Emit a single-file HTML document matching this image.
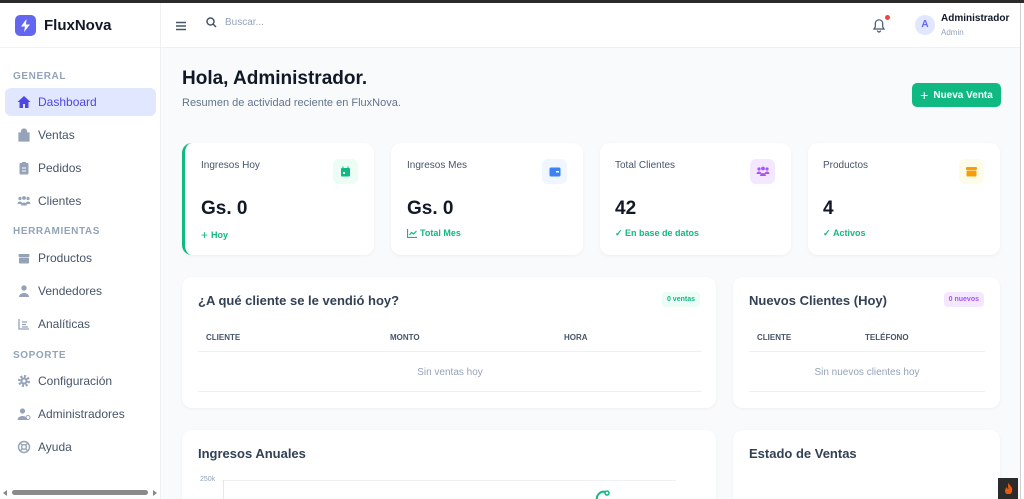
<!DOCTYPE html>
<html style="width:1024px;height:499px;overflow:hidden"><head><meta charset="utf-8"><style>
*{box-sizing:border-box;margin:0;padding:0}
body{width:1024px;height:499px;overflow:hidden;font-family:"Liberation Sans",sans-serif;background:#f8fafc;position:relative;color:#1e293b}
.topbar{position:absolute;left:0;top:0;width:1024px;height:3px;background:#2b2b2b}
.side{position:absolute;left:0;top:3px;width:161px;height:496px;background:#fff;border-right:1px solid #eef0f4}
.logo{height:45px;border-bottom:1px solid #f1f3f7;display:flex;align-items:center;padding-left:15px}
.logo .ic{width:21px;height:21px;border-radius:5px;background:#6366f1;display:flex;align-items:center;justify-content:center}
.logo span{font-weight:bold;font-size:15px;margin-left:8px;color:#111827}
.sec{font-size:10px;font-weight:bold;color:#94a3b8;letter-spacing:.6px;padding-left:13px;position:absolute}
.item{position:absolute;left:5px;width:151px;height:28px;border-radius:6px;display:flex;align-items:center;padding-left:12px;font-size:12px;color:#475569}
.item svg{width:14px;height:14px;margin-right:7px}
.item.act{background:#e0e7ff;color:#4f46e5}
.hdr{position:absolute;left:161px;top:3px;width:859px;height:45px;background:#fff;border-bottom:1px solid #eef0f4}
.card{position:absolute;background:#fff;border-radius:10px;box-shadow:0 1px 3px rgba(0,0,0,.05);overflow:hidden}
.lbl{position:absolute;left:18px;top:17px;font-size:10px;color:#475569}
.val{position:absolute;left:18px;top:55px;font-size:19px;font-weight:bold;color:#111827}
.sub{position:absolute;left:18px;top:85px;font-size:9px;font-weight:bold;color:#10b981;display:flex;align-items:center}
.bx{position:absolute;right:16px;top:16px;width:25px;height:25px;border-radius:6px;display:flex;align-items:center;justify-content:center}
.ttl{position:absolute;left:16px;top:16px;font-size:13px;font-weight:bold;color:#334155}
.th{position:absolute;top:56px;font-size:8px;font-weight:bold;color:#475569}
.line{position:absolute;left:16px;height:1px;background:#eef0f4}
.empty{position:absolute;top:90px;font-size:10px;color:#94a3b8;text-align:center}
.badge{position:absolute;top:15px;height:15px;border-radius:4px;font-size:7px;font-weight:bold;display:flex;align-items:center;padding:0 5px}
</style></head><body>
<div class="topbar"></div>
<div class="side">
 <div class="logo"><div class="ic"><svg width="11" height="13" viewBox="0 0 11 13"><path d="M6.5 0L1 7.5h4L4 13l6-7.5H6z" fill="#fff"/></svg></div><span>FluxNova</span></div>
 <div class="sec" style="top:68px">GENERAL</div>
 <div class="item act" style="top:85px"><svg viewBox="0 0 14 14"><path d="M7 1L0.5 7H2.5v6h3.5V9h2v4h3.5V7h2z" fill="#4f46e5"/></svg>Dashboard</div>
 <div class="item" style="top:118px"><svg viewBox="0 0 14 14"><path d="M2 5h10v8H2z M4.5 5V3.5a2.5 2.5 0 015 0V5" fill="#94a3b8" stroke="#94a3b8" stroke-width="1.2"/></svg>Ventas</div>
 <div class="item" style="top:151px"><svg viewBox="0 0 14 14"><rect x="2.5" y="2" width="9" height="11.5" rx="1" fill="#94a3b8"/><rect x="5" y="1" width="4" height="2.5" fill="#94a3b8"/><path d="M5 7h4M5 10h4" stroke="#fff"/></svg>Pedidos</div>
 <div class="item" style="top:184px"><svg viewBox="0 0 14 14" fill="#94a3b8"><circle cx="3" cy="4.5" r="1.6"/><circle cx="7" cy="4" r="1.9"/><circle cx="11" cy="4.5" r="1.6"/><path d="M0.5 10a2.5 2.5 0 015 0zM4 11.5a3 3 0 016 0zM8.5 10a2.5 2.5 0 015 0z"/></svg>Clientes</div>
 <div class="sec" style="top:223px">HERRAMIENTAS</div>
 <div class="item" style="top:241px"><svg viewBox="0 0 14 14" fill="#94a3b8"><rect x="1.5" y="3" width="11" height="3" rx="1"/><rect x="2" y="6.5" width="10" height="6" rx="1"/></svg>Productos</div>
 <div class="item" style="top:274px"><svg viewBox="0 0 14 14" fill="#94a3b8"><circle cx="7" cy="4" r="2.7"/><path d="M2 13a5 4 0 0110 0z"/></svg>Vendedores</div>
 <div class="item" style="top:307px"><svg viewBox="0 0 14 14" fill="none" stroke="#94a3b8" stroke-width="1.3"><path d="M2 2v10h10M5 5h5M5 7.5h4M5 10h6"/></svg>Analíticas</div>
 <div class="sec" style="top:347px">SOPORTE</div>
 <div class="item" style="top:364px"><svg viewBox="0 0 14 14"><circle cx="7" cy="7" r="4.5" fill="none" stroke="#94a3b8" stroke-width="3" stroke-dasharray="2 1.5"/><circle cx="7" cy="7" r="3.5" fill="#94a3b8"/><circle cx="7" cy="7" r="1.5" fill="#fff"/></svg>Configuración</div>
 <div class="item" style="top:397px"><svg viewBox="0 0 14 14" fill="#94a3b8"><circle cx="5.5" cy="4" r="2.6"/><path d="M0.5 13a5 4 0 0110 0z"/><circle cx="11" cy="10.5" r="2" fill="none" stroke="#94a3b8"/></svg>Administradores</div>
 <div class="item" style="top:430px"><svg viewBox="0 0 14 14" fill="none" stroke="#94a3b8" stroke-width="1.4"><circle cx="7" cy="7" r="5.5"/><circle cx="7" cy="7" r="2.3"/><path d="M3 3l2.3 2.3M11 3L8.7 5.3M3 11l2.3-2.3M11 11L8.7 8.7"/></svg>Ayuda</div>
 <div style="position:absolute;left:3px;top:487px;width:0;height:0;border:3px solid transparent;border-right:4px solid #888;border-left:0"></div>
 <div style="position:absolute;left:12px;top:487px;width:136px;height:5px;border-radius:3px;background:#8a8a8a"></div>
 <div style="position:absolute;left:153px;top:487px;width:0;height:0;border:3px solid transparent;border-left:4px solid #888;border-right:0"></div>
</div>
<div class="hdr">
 <svg style="position:absolute;left:15px;top:18px" width="11" height="10"><path d="M0 1.5h10M0 5h10M0 8.5h10" stroke="#475569" stroke-width="1.4"/></svg>
 <svg style="position:absolute;left:45px;top:14px" width="11" height="11" fill="none" stroke="#475569" stroke-width="1.5"><circle cx="4.5" cy="4.5" r="3.5"/><path d="M7 7l3 3"/></svg>
 <div style="position:absolute;left:64px;top:14px;font-size:10px;color:#94a3b8">Buscar...</div>
 <svg style="position:absolute;left:711px;top:14px" width="14" height="16" fill="none" stroke="#475569" stroke-width="1.2"><path d="M2 12h10l-1.3-2V6.5a3.7 3.7 0 00-7.4 0V10zM5.5 13.5a1.5 1.5 0 003 0"/></svg>
 <div style="position:absolute;left:724px;top:12px;width:5px;height:5px;border-radius:50%;background:#ef4444"></div>
 <div style="position:absolute;left:754px;top:12px;width:20px;height:20px;border-radius:50%;background:#e0e7ff;color:#6366f1;font-size:10px;font-weight:bold;text-align:center;line-height:20px">A</div>
 <div style="position:absolute;left:780px;top:10px;font-size:10px;font-weight:bold;color:#111827">Administrador</div>
 <div style="position:absolute;left:780px;top:25px;font-size:8px;color:#94a3b8">Admin</div>
</div>
<div style="position:absolute;left:1020px;top:3px;width:4px;height:496px;background:#fff;border-left:1px solid #d0d0d0"></div>
<div style="position:absolute;left:182px;top:68px;font-size:19px;font-weight:bold;color:#111827">Hola, Administrador.</div>
<div style="position:absolute;left:182px;top:97px;font-size:11px;color:#64748b">Resumen de actividad reciente en FluxNova.</div>
<div style="position:absolute;left:912px;top:83px;width:89px;height:24px;border-radius:5px;background:#10b981;color:#fff;font-size:10px;font-weight:bold;display:flex;align-items:center;justify-content:center"><span style="font-size:14px;font-weight:normal;margin-right:5px">+</span>Nueva Venta</div>

<div class="card" style="left:182px;top:143px;width:192px;height:112px;border-left:3px solid #10b981"><div class="lbl" style="left:16px">Ingresos Hoy</div><div class="bx" style="background:#ecfdf5"><svg width="11" height="11"><rect x="1" y="2" width="9" height="8.5" rx="1" fill="#10b981"/><rect x="2.5" y="0.5" width="1" height="2" fill="#10b981"/><rect x="7.5" y="0.5" width="1" height="2" fill="#10b981"/><rect x="3" y="6" width="2" height="2" fill="#fff"/></svg></div><div class="val" style="left:16px">Gs. 0</div><div class="sub" style="left:16px"><span style="font-size:12px;font-weight:normal;margin-right:3px">+</span>Hoy</div></div>
<div class="card" style="left:391px;top:143px;width:192px;height:112px"><div class="lbl" style="left:16px">Ingresos Mes</div><div class="bx" style="background:#eff6ff"><svg width="12" height="10"><rect x="0.5" y="0.5" width="11" height="9" rx="1.5" fill="#3b82f6"/><rect x="7" y="4" width="3" height="1.5" fill="#fff"/></svg></div><div class="val" style="left:16px">Gs. 0</div><div class="sub" style="left:16px"><svg width="10" height="9" style="margin-right:3px" fill="none" stroke="#10b981" stroke-width="1.2"><path d="M0.5 0v8.5H10M2.5 6l2-2.5 2 1.5 3-3"/></svg>Total Mes</div></div>
<div class="card" style="left:600px;top:143px;width:191px;height:112px"><div class="lbl" style="left:15px">Total Clientes</div><div class="bx" style="background:#f3e8ff"><svg width="14" height="11" fill="#a855f7"><circle cx="3" cy="3" r="1.6"/><circle cx="7" cy="2.5" r="1.9"/><circle cx="11" cy="3" r="1.6"/><path d="M0.5 8a2.5 2.5 0 015 0zM4 10a3 3 0 016 0zM8.5 8a2.5 2.5 0 015 0z"/></svg></div><div class="val" style="left:15px">42</div><div class="sub" style="left:15px">✓&nbsp;En base de datos</div></div>
<div class="card" style="left:808px;top:143px;width:192px;height:112px"><div class="lbl" style="left:15px">Productos</div><div class="bx" style="background:#fefce8"><svg width="11" height="10" fill="#f59e0b"><rect x="0" y="0" width="11" height="3" rx="1"/><rect x="0.5" y="3.5" width="10" height="6" rx="1"/></svg></div><div class="val" style="left:15px">4</div><div class="sub" style="left:15px">✓&nbsp;Activos</div></div>

<div class="card" style="left:182px;top:277px;width:534px;height:131px">
 <div class="ttl">¿A qué cliente se le vendió hoy?</div>
 <div class="badge" style="right:16px;background:#ecfdf5;color:#10b981">0 ventas</div>
 <div class="th" style="left:24px">CLIENTE</div><div class="th" style="left:208px">MONTO</div><div class="th" style="left:382px">HORA</div>
 <div class="line" style="top:74px;width:504px"></div>
 <div class="empty" style="left:16px;width:504px">Sin ventas hoy</div>
 <div class="line" style="top:114px;width:504px"></div>
</div>
<div class="card" style="left:733px;top:277px;width:267px;height:131px">
 <div class="ttl">Nuevos Clientes (Hoy)</div>
 <div class="badge" style="right:16px;background:#f3e8ff;color:#a855f7">0 nuevos</div>
 <div class="th" style="left:24px">CLIENTE</div><div class="th" style="left:132px">TELÉFONO</div>
 <div class="line" style="top:74px;width:236px"></div>
 <div class="empty" style="left:16px;width:236px">Sin nuevos clientes hoy</div>
 <div class="line" style="top:114px;width:236px"></div>
</div>
<div class="card" style="left:182px;top:430px;width:534px;height:69px;border-radius:10px 10px 0 0">
 <div class="ttl">Ingresos Anuales</div>
 <div style="position:absolute;left:18px;top:46px;font-size:7px;color:#94a3b8">250k</div>
 <div style="position:absolute;left:40px;top:50px;width:454px;height:1px;background:#eef0f4"></div>
 <div style="position:absolute;left:41px;top:50px;width:1px;height:30px;background:#e5e7eb"></div>
 <svg style="position:absolute;left:410px;top:60px" width="20" height="10"><path d="M5 10a7 7 0 019-8" fill="none" stroke="#10b981" stroke-width="2"/><circle cx="15" cy="3" r="2" fill="#fff" stroke="#10b981" stroke-width="1.5"/></svg>
</div>
<div class="card" style="left:733px;top:430px;width:267px;height:69px;border-radius:10px 10px 0 0"><div class="ttl">Estado de Ventas</div></div>
<div style="position:absolute;left:998px;top:478px;width:20px;height:21px;background:#2b2b2b;display:flex;align-items:center;justify-content:center"><svg width="9" height="11"><path d="M4.5 0C6 3 9 4 8 8a3.5 3.5 0 01-7 0C1 6 2 5 3 4c0 2 1 2 1.5 2C4 4 3.5 2 4.5 0z" fill="#ea580c"/></svg></div>
</body></html>
